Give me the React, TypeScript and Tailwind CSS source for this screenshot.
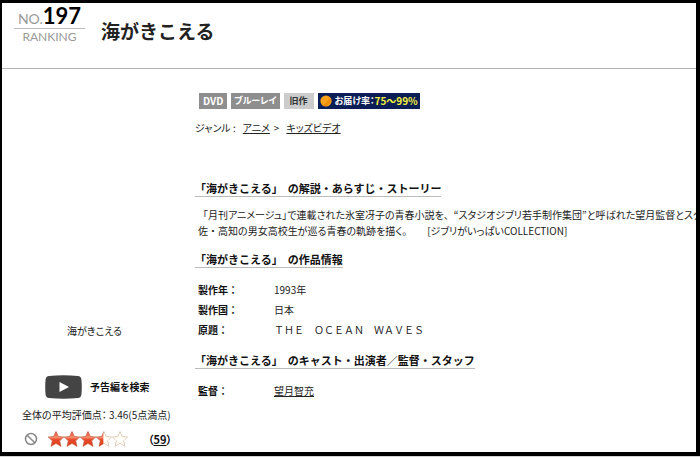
import React from "react";

const STAR = "M8 0.6 L10.3 5.6 L15.7 6.1 L11.6 9.8 L12.9 15.3 L8 12.3 L3.1 15.3 L4.4 9.8 L0.3 6.1 L5.7 5.6 Z";

function Star({ fill, id }: { fill: number; id: string }) {
  return (
    <svg viewBox="0 0 16 16" className="h-4 w-4" aria-hidden="true">
      <defs>
        <linearGradient id={`${id}-g`} x1="0" y1="0" x2="0" y2="1">
          <stop offset="0" stopColor="#e5502f" />
          <stop offset="0.4" stopColor="#f58a6c" />
          <stop offset="0.55" stopColor="#e84a28" />
          <stop offset="1" stopColor="#e2381a" />
        </linearGradient>
        <clipPath id={`${id}-c`}>
          <rect x="0" y="0" width={16 * fill} height="16" />
        </clipPath>
      </defs>
      <path d={STAR} fill="#fffdfa" stroke="#dfcdb9" strokeWidth="1" />
      <path d={STAR} fill={`url(#${id}-g)`} stroke="#c95a41" strokeWidth="0.6" clipPath={`url(#${id}-c)`} />
    </svg>
  );
}

function Heading({ children }: { children: React.ReactNode }) {
  return (
    <h2 className="w-fit border-b border-[#bbb] text-[11px] leading-4 font-bold whitespace-nowrap text-[#111]">
      「海がきこえる」&nbsp; {children}
    </h2>
  );
}

/* Keeps a punctuation mark at full width inside proportionally set text. */
function Full({ children }: { children: React.ReactNode }) {
  return <span className="[font-feature-settings:normal]">{children}</span>;
}

function Row({ label, children }: { label: string; children: React.ReactNode }) {
  return (
    <div className="flex">
      <dt className="w-[76px] shrink-0 font-bold text-[#111]">{label}</dt>
      <dd className="whitespace-nowrap">{children}</dd>
    </div>
  );
}

export default function App() {
  return (
    <div className="flex min-h-screen flex-col overflow-hidden bg-[#d4d4d4] pb-px font-['Noto_Sans_CJK_JP','Noto_Sans',sans-serif] text-[10px] leading-4 text-[#222]">
      <div className="grow border-t-3 border-r-4 border-b-4 border-l-2 border-black bg-white">
        <header className="flex h-[66px] items-start border-b border-[#b4b4b4] pl-3">
          <div className="w-[71px] pt-1 font-['Lato',sans-serif]">
            <div className="flex items-baseline justify-center border-b border-[#bbb] text-[#999]">
              <span className="text-[14px] leading-[18px]">NO.</span>
              <span className="text-[22px] leading-[18px] font-bold text-black">197</span>
            </div>
            <div className="text-center text-[12px] leading-4 text-[#999]">RANKING</div>
          </div>
          <h1 className="ml-4 pt-4 text-[19px] leading-6 font-bold text-[#222]">海がきこえる</h1>
        </header>

        <div className="flex">
          <aside className="w-[193px] shrink-0 pt-[254px] [font-feature-settings:'palt']">
            <p className="pr-2 text-center">海がきこえる</p>
            <button type="button" className="mt-9 ml-[43px] flex items-center gap-2 font-bold text-[#111]">
              <svg viewBox="0 0 37 24" className="h-6 w-[37px]" aria-hidden="true">
                <path
                  d="M4 1 Q18.5 -0.6 33 1 Q36 1.4 36.4 4.5 Q37.2 12 36.4 19.5 Q36 22.6 33 23 Q18.5 24.6 4 23 Q1 22.6 0.6 19.5 Q-0.2 12 0.6 4.5 Q1 1.4 4 1 Z"
                  fill="#444"
                />
                <path d="M14.5 7 L24 12 L14.5 17 Z" fill="#fff" />
              </svg>
              予告編を検索
            </button>
            <p className="mt-2 pl-5 whitespace-nowrap">全体の平均評価点： 3.46(5点満点)</p>
            <div className="mt-2 flex items-center pl-[22px]">
              <svg viewBox="0 0 14 14" className="h-[14px] w-[14px]" fill="none" stroke="#888" strokeWidth="1.5" aria-hidden="true">
                <circle cx="7" cy="7" r="5.5" />
                <path d="M3.2 3.2 L10.8 10.8" />
              </svg>
              <div className="ml-[10px] flex" role="img" aria-label="3.46">
                <Star id="s1" fill={1} />
                <Star id="s2" fill={1} />
                <Star id="s3" fill={1} />
                <Star id="s4" fill={0.46} />
                <Star id="s5" fill={0} />
              </div>
              <span className="ml-5 text-[11px] font-bold text-[#111]">
                （<a href="#reviews" className="underline">59</a>）
              </span>
            </div>
          </aside>

          <main className="min-w-0 grow overflow-hidden pt-6">
            <div className="flex gap-1 pl-1 text-[9px] leading-4 font-bold whitespace-nowrap text-white [font-feature-settings:'palt']">
              <span className="bg-[#8e8e8e] px-1 text-[10px]">DVD</span>
              <span className="bg-[#8e8e8e] px-[3px]">ブルーレイ</span>
              <span className="bg-[#ccc] px-[6px] text-[#333]">旧作</span>
              <span className="flex items-center bg-[#0b1f56] px-[2px]">
                <svg viewBox="0 0 12 12" className="mr-[3px] h-3 w-3" aria-hidden="true">
                  <circle cx="6" cy="6" r="5.6" fill="#f9a11b" />
                  <path d="M9.5 2 A5.6 5.6 0 0 1 2 10 Q7 9 9.5 2 Z" fill="#f28c00" />
                </svg>
                お届け率：<span className="text-[10px] text-[#f4f03a]">75～99%</span>
              </span>
            </div>
            <p className="mt-[11px] flex gap-[7px] whitespace-nowrap [font-feature-settings:'palt']">
              <span>ジャンル :</span>
              <span className="flex gap-1">
                <a href="#anime" className="underline">アニメ</a>
                <span>&gt;</span>
              </span>
              <a href="#kids" className="underline">キッズビデオ</a>
            </p>

            <div className="mt-11">
              <Heading>の解説・あらすじ・ストーリー</Heading>
              <p className="mt-[10px] pl-[3px] whitespace-nowrap [font-feature-settings:'palt']">
                <Full>「</Full>月刊アニメージュ」で連載された氷室冴子の青春小説を<Full>、</Full>“スタジオジブリ若手制作集団”と呼ばれた望月監督とスタ
                <br />
                佐<Full>・</Full>高知の男女高校生が巡る青春の軌跡を描く。　　[ジブリがいっぱいCOLLECTION]
              </p>
            </div>

            <div className="mt-3">
              <Heading>の作品情報</Heading>
              <dl className="mt-3 pl-[3px] leading-5">
                <Row label="製作年：">1993年</Row>
                <Row label="製作国：">日本</Row>
                <Row label="原題：">ＴＨＥ　ＯＣＥＡＮ　ＷＡＶＥＳ</Row>
              </dl>
            </div>

            <div className="mt-3">
              <Heading>のキャスト・出演者／監督・スタッフ</Heading>
              <dl className="mt-3 pl-[3px] leading-5">
                <Row label="監督：">
                  <a href="#director" className="underline">望月智充</a>
                </Row>
              </dl>
            </div>
          </main>
        </div>
      </div>
    </div>
  );
}
